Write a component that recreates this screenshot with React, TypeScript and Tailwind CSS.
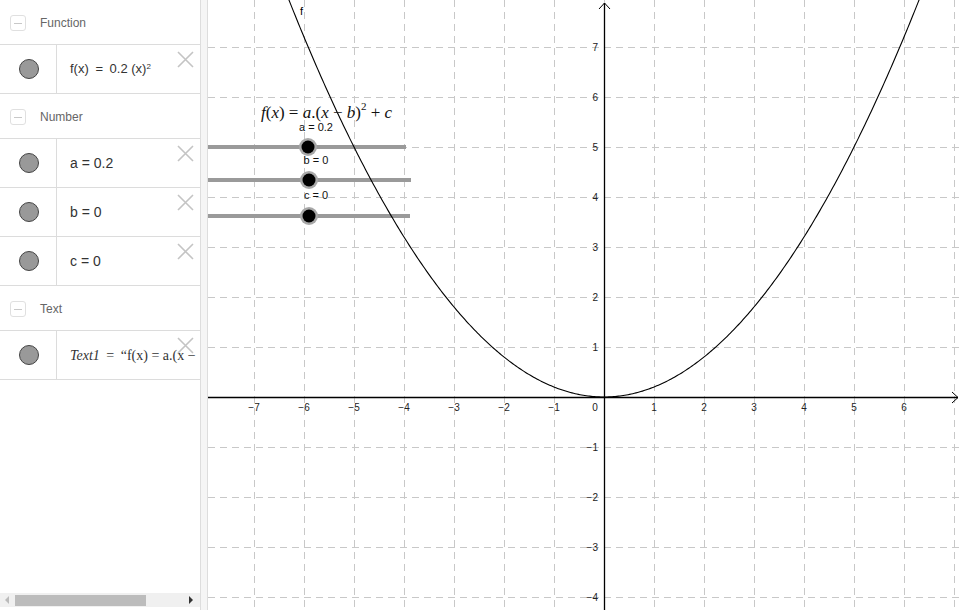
import React from "react";

const sans = { fontFamily: '"Liberation Sans", Arial, sans-serif' };
const serif = { fontFamily: '"Liberation Serif", "Times New Roman", serif' };

function Header({ label }: { label: string }) {
  return (
    <div className="flex h-[45px] items-center border-b border-[#dcdcdc] pl-[10px] pt-[2px]">
      <div className="flex h-[16px] w-[16px] items-center justify-center rounded-[3px] border border-[#e0e0e0]">
        <div className="h-[1px] w-[8px] bg-[#c8c8c8]" />
      </div>
      <span className="ml-[14px] text-[12px] text-[#666]">{label}</span>
    </div>
  );
}

function CloseX() {
  return (
    <svg className="absolute right-[6px] top-[6px]" width="17" height="17" viewBox="0 0 17 17">
      <path d="M1 1 L16 16 M16 1 L1 16" stroke="#c4c4c4" strokeWidth="1.6" fill="none" />
    </svg>
  );
}

function Row({ children }: { children: React.ReactNode }) {
  return (
    <div className="relative flex h-[49px] border-b border-[#dcdcdc]">
      <div className="flex w-[57px] shrink-0 items-center justify-center border-r border-[#dcdcdc] pl-[1px]">
        <div className="h-[20px] w-[20px] rounded-full border border-[#444] bg-[#999]" />
      </div>
      <div className="flex min-w-0 flex-1 items-center overflow-hidden whitespace-nowrap pl-[13px] text-[#333]">
        {children}
      </div>
      <CloseX />
    </div>
  );
}

function Graph() {
  const ox = 604;
  const oy = 397;
  const u = 50;
  const vx: number[] = [];
  for (let k = -7; k <= 7; k++) vx.push(ox + u * k);
  const hy: number[] = [];
  for (let k = -4; k <= 7; k++) if (k !== 0) hy.push(oy - u * k);
  const pts: string[] = [];
  for (let i = 0; i <= 400; i++) {
    const x = -6.4 + (12.8 * i) / 400;
    pts.push(`${(ox + u * x).toFixed(2)},${(oy - u * 0.2 * x * x).toFixed(2)}`);
  }
  const xl: number[] = [];
  for (let k = -7; k <= 6; k++) if (k !== 0) xl.push(k);
  const yl: number[] = [];
  for (let k = -4; k <= 7; k++) if (k !== 0) yl.push(k);
  const lab = (n: number) => (n < 0 ? `\u2212${-n}` : `${n}`);

  const slider = (y: number, x2: number, kx: number, label: string, ly: number) => (
    <g key={label}>
      <line x1={208} y1={y} x2={x2} y2={y} stroke="#9a9a9a" strokeWidth={4} />
      <circle cx={kx} cy={y} r={9} fill="#a8a8a8" />
      <circle cx={kx} cy={y} r={6.5} fill="#000" />
      <text x={316} y={ly} fontSize={11} textAnchor="middle" dominantBaseline="middle" fill="#111" style={sans}>
        {label}
      </text>
    </g>
  );

  return (
    <svg width="753" height="610" viewBox="208 0 753 610" className="block">
      <rect x={208} y={0} width={753} height={610} fill="#fff" />
      {vx.map((x) => (
        <line key={"v" + x} x1={x + 0.5} y1={0} x2={x + 0.5} y2={610} stroke="#c8c8c8" strokeWidth={1} strokeDasharray="7 5" />
      ))}
      {hy.map((y) => (
        <line key={"h" + y} x1={208} y1={y + 0.5} x2={961} y2={y + 0.5} stroke="#c8c8c8" strokeWidth={1} strokeDasharray="7 5" />
      ))}
      {slider(147, 406, 308, "a = 0.2", 128)}
      {slider(180, 411, 309, "b = 0", 161)}
      {slider(216, 410, 309, "c = 0", 196)}
      <line x1={208} y1={oy + 0.5} x2={958} y2={oy + 0.5} stroke="#000" strokeWidth={1.3} />
      <path d="M952 392 L958 397.5 L952 403" stroke="#000" strokeWidth={1} fill="none" />
      <line x1={ox + 0.5} y1={610} x2={ox + 0.5} y2={3} stroke="#000" strokeWidth={1.3} />
      <path d="M599 9 L604.5 3 L610 9" stroke="#000" strokeWidth={1} fill="none" />
      {xl.map((k) => (
        <text key={"xl" + k} x={ox + u * k} y={411} fontSize={10} textAnchor="middle" fill="#222" style={sans}>
          {lab(k)}
        </text>
      ))}
      <text x={595} y={411} fontSize={10} textAnchor="middle" fill="#222" style={sans}>0</text>
      {yl.map((k) => (
        <text key={"yl" + k} x={598} y={oy - u * k + 3.5} fontSize={10} textAnchor="end" fill="#222" style={sans}>
          {lab(k)}
        </text>
      ))}
      <polyline points={pts.join(" ")} fill="none" stroke="#000" strokeWidth={1.1} />
      <text x={300} y={15} fontSize={11} fill="#000" style={sans}>f</text>
      <text x={261} y={118} fontSize={17} fill="#111" style={serif}>
        <tspan fontStyle="italic">f</tspan>
        <tspan>(</tspan>
        <tspan fontStyle="italic">x</tspan>
        <tspan>{") = "}</tspan>
        <tspan fontStyle="italic">a</tspan>
        <tspan>.(</tspan>
        <tspan fontStyle="italic">x</tspan>
        <tspan>{" \u2212 "}</tspan>
        <tspan fontStyle="italic">b</tspan>
        <tspan>)</tspan>
        <tspan fontSize={11} dy={-8}>2</tspan>
        <tspan dy={8}>{" + "}</tspan>
        <tspan fontStyle="italic">c</tspan>
      </text>
    </svg>
  );
}

export default function App() {
  return (
    <div className="flex h-[610px] w-[961px] overflow-hidden bg-white" style={sans}>
      <div className="relative flex h-full w-[200px] shrink-0 flex-col">
        <Header label="Function" />
        <Row>
          <span className="text-[13px]">
            f(x) <span className="mx-[3px]">=</span> 0.2 (x)<sup className="text-[8px]">2</sup>
          </span>
        </Row>
        <Header label="Number" />
        <Row>
          <span className="text-[14px]">a = 0.2</span>
        </Row>
        <Row>
          <span className="text-[14px]">b = 0</span>
        </Row>
        <Row>
          <span className="text-[14px]">c = 0</span>
        </Row>
        <Header label="Text" />
        <Row>
          <span className="text-[14px]" style={serif}>
            <i>Text1</i> <span className="mx-[3px]">=</span> “f(x) = a.(x −
          </span>
        </Row>
        <div className="flex-1" />
        <div className="mb-[3px] flex h-[14px] items-center bg-[#f0f0f0]">
          <svg width="14" height="14" viewBox="0 0 14 14" className="shrink-0">
            <path d="M9 3 L5 7 L9 11 Z" fill="#bbb" />
          </svg>
          <div className="ml-[1px] h-[11px] w-[131px] bg-[#bcbcbc]" />
          <div className="flex-1" />
          <svg width="14" height="14" viewBox="0 0 14 14" className="mr-[2px] shrink-0">
            <path d="M5 3 L9 7 L5 11 Z" fill="#333" />
          </svg>
        </div>
      </div>
      <div className="h-full w-[8px] shrink-0 border-x border-[#dddddd] bg-[#f5f5f5]" />
      <div className="h-full flex-1">
        <Graph />
      </div>
    </div>
  );
}
